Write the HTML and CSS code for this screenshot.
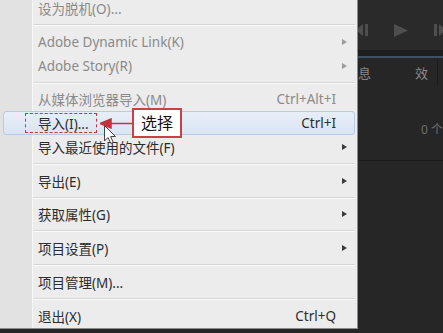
FILE: index.html
```html
<!DOCTYPE html>
<html lang="zh-CN">
<head>
  <meta charset="UTF-8">
  <meta name="viewport" content="width=device-width, initial-scale=1.0">
  <title>文件菜单 - 导入</title>
  <link rel="stylesheet" href="styles.css">
</head>
<body>
  <div class="screen">
    <div class="menu">
      <div class="item off"><span class="label">设为脱机(O)...</span></div>
      <div class="sep"></div>
      <div class="item off"><span class="label">Adobe Dynamic Link(K)</span><span class="sub"></span></div>
      <div class="item off"><span class="label">Adobe Story(R)</span><span class="sub"></span></div>
      <div class="sep tight"></div>
      <div class="item off"><span class="label">从媒体浏览器导入(M)</span><span class="key">Ctrl+Alt+I</span></div>
      <div class="item hot"><span class="label">导入(I)...</span><span class="key">Ctrl+I</span></div>
      <div class="item"><span class="label">导入最近使用的文件(F)</span><span class="sub"></span></div>
      <div class="sep"></div>
      <div class="item"><span class="label">导出(E)</span><span class="sub"></span></div>
      <div class="sep tight"></div>
      <div class="item"><span class="label">获取属性(G)</span><span class="sub"></span></div>
      <div class="sep"></div>
      <div class="item"><span class="label">项目设置(P)</span><span class="sub"></span></div>
      <div class="sep"></div>
      <div class="item"><span class="label">项目管理(M)...</span></div>
      <div class="sep"></div>
      <div class="item"><span class="label">退出(X)</span><span class="key">Ctrl+Q</span></div>
    </div>

    <div class="panel">
      <div class="transport">
        <svg width="12" height="12" viewBox="0 0 12 12"><polygon points="0,6 7,0 7,12"/><rect x="9" y="0" width="3" height="12"/></svg>
        <svg width="14" height="13" viewBox="0 0 14 13"><polygon points="0,0 14,6.5 0,13"/></svg>
        <svg width="12" height="12" viewBox="0 0 12 12"><rect x="0" y="0" width="3" height="12"/><polygon points="5,0 12,6 5,12"/></svg>
      </div>
      <div class="shade"></div>
      <div class="tabline"></div>
      <div class="tabs">
        <span class="tab">息</span>
        <span class="tab">效</span>
        <span class="divider"></span>
      </div>
      <div class="bin">0 个</div>
      <div class="rule"></div>
      <div class="rest"></div>
    </div>

    <!-- annotation drawn over the menu -->
    <div class="mark"></div>
    <svg class="pointer-arrow" width="33" height="11" viewBox="0 0 33 11">
      <line x1="9" y1="5.5" x2="33" y2="5.5"/>
      <polygon points="0,5.5 11,1 11,10"/>
    </svg>
    <div class="callout">选择</div>
    <svg class="cursor" width="15" height="21" viewBox="0 0 15 21">
      <path d="M1.5 1.5 V17 L5 13.5 L7.8 19.5 L10.3 18.4 L7.6 12.5 H12.5 Z"/>
    </svg>
  </div>
</body>
</html>
```

FILE: styles.css
```css
body {
  margin: 0;
  background: #262626;
  font-family: "Noto Sans", "Noto Sans CJK SC", sans-serif;
  font-size: 13.5px;
}

.screen {
  position: relative;
  display: flex;
  height: 333px;
  overflow: hidden;
}

/* Context menu */
.menu {
  flex: 0 0 358px;
  box-sizing: border-box;
  align-self: flex-start;
  margin-top: -4px;
  background: linear-gradient(to right, #e2e2e2 0 32px, #f7f7f7 32px 33px, #ececec 33px);
  border-right: 1px solid #8c8c8c;
  border-bottom: 1px solid #8c8c8c;
  color: #2c2c2c;
}

.item {
  display: flex;
  align-items: center;
  height: 22px;
  margin: 0 2px 0 3px;
  padding: 0 2px 0 34px;
  border: 1px solid transparent;
  border-radius: 3px;
  white-space: nowrap;
}

.item.off {
  color: #8a8a8a;
}

.item.hot {
  background: linear-gradient(#e7eef8, #dae5f3);
  border-color: #b7cbe4;
}

.label {
  flex: 1;
}

.key {
  margin-right: 16px;
}

.sub {
  width: 16px;
  display: flex;
  justify-content: center;
}

.sub::before {
  content: "";
  border-left: 5px solid #3a3a3a;
  border-top: 3.5px solid transparent;
  border-bottom: 3.5px solid transparent;
}

.off .sub::before {
  border-left-color: #9c9c9c;
}

.sep {
  height: 0;
  margin: 4px 2px 4px 33px;
  border-top: 1px solid #d6d6d6;
  border-bottom: 1px solid #fbfbfb;
}

.sep.tight {
  margin-bottom: 3px;
}

/* Dark panel on the right */
.panel {
  flex: 1;
  display: flex;
  flex-direction: column;
  overflow: hidden;
  color: #888;
}

.transport {
  height: 40px;
  padding-top: 10px;
  display: flex;
  justify-content: center;
  align-items: center;
  gap: 26px;
  background: #2a2a2a;
  fill: #4e4e4e;
}

.transport svg {
  flex: none;
}

.shade {
  height: 6px;
  background: #1e1e1e;
}

.tabline {
  height: 2px;
  background: #3e5163;
}

.tabs {
  height: 28px;
  display: flex;
  align-items: center;
  font-size: 13px;
  white-space: nowrap;
  background: #262626;
}

.tab + .tab {
  margin-left: 44px;
}

.divider {
  align-self: stretch;
  width: 1px;
  margin-left: 9px;
  background: #1c1c1c;
}

.bin {
  height: 38px;
  padding-top: 36px;
  text-align: right;
  font-size: 12px;
  line-height: 16px;
  color: #6f6f6f;
  white-space: nowrap;
}

.rule {
  height: 1px;
  background: #1b1b1b;
}

.rest {
  flex: 1;
  background: #262626;
}

/* Annotation */
.mark {
  position: absolute;
  left: 25px;
  top: 113px;
  width: 72px;
  height: 20px;
  box-sizing: border-box;
  border: 1px dashed #c5353a;
}

.pointer-arrow {
  position: absolute;
  left: 100px;
  top: 118px;
  fill: #c8303a;
  stroke: #c8303a;
  stroke-width: 1.5;
}

.callout {
  position: absolute;
  left: 132px;
  top: 108px;
  width: 50px;
  height: 30px;
  box-sizing: border-box;
  border: 2px solid #cc3f44;
  background: #fff;
  color: #111;
  font-size: 16px;
  line-height: 26px;
  text-align: center;
}

.cursor {
  position: absolute;
  left: 103px;
  top: 124px;
  fill: #fff;
  stroke: #444;
  stroke-width: 1;
}
```
